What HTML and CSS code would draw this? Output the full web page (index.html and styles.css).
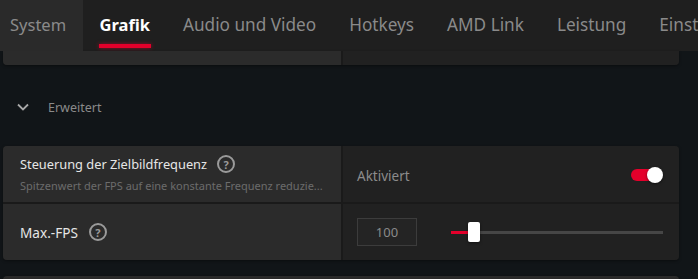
FILE: index.html
```html
<!DOCTYPE html>
<html lang="de">
<head>
    <meta charset="UTF-8">
    <title>Grafik</title>
    <link rel="stylesheet" href="styles.css">
</head>
<body>

<nav class="tabs">
    <div class="tab first">System</div>
    <div class="tab active">Grafik</div>
    <div class="tab">Audio und Video</div>
    <div class="tab">Hotkeys</div>
    <div class="tab">AMD Link</div>
    <div class="tab">Leistung</div>
    <div class="tab">Einste</div>
</nav>

<div class="content">
    <div class="card card-top">
        <div class="cell left"></div>
        <div class="cell right"></div>
    </div>

    <div class="section">
        <svg class="chevron" width="12" height="8" viewBox="0 0 12 8">
            <path d="M1 1.5 L6 6.5 L11 1.5" fill="none" stroke="#a8a8a8" stroke-width="1.8"/>
        </svg>
        <span>Erweitert</span>
    </div>

    <div class="card">
        <div class="cell left">
            <div class="title">Steuerung der Zielbildfrequenz <span class="help">?</span></div>
            <div class="sub">Spitzenwert der FPS auf eine konstante Frequenz reduzie...</div>
        </div>
        <div class="cell right">
            <span class="value">Aktiviert</span>
            <div class="toggle"><div class="knob"></div></div>
        </div>
        <div class="cell left">
            <div class="title short">Max.-FPS <span class="help">?</span></div>
        </div>
        <div class="cell right">
            <div class="num">100</div>
            <div class="slider">
                <div class="fill" style="width: 9%"></div>
                <div class="thumb" style="left: 9%"></div>
            </div>
        </div>
    </div>

    <div class="card card-next"></div>
</div>

</body>
</html>
```

FILE: styles.css
```css
body {
    margin: 0;
    background-color: #111518;
    font-family: "Noto Sans", "Open Sans", sans-serif;
    overflow: hidden;
}
.tabs {
    display: flex;
    height: 51px;
    background-color: #1f1f1f;
    white-space: nowrap;
    overflow: hidden;
}
.tab {
    display: flex;
    align-items: center;
    padding: 0 16.5px 3px 16.5px;
    font-size: 17.2px;
    color: #8a8a8a;
    position: relative;
}
.tab.first {
    padding-left: 10px;
    padding-right: 17px;
    font-size: 16.5px;
    background-color: #2a2a2a;
}
.tab.active {
    color: #ffffff;
    font-size: 16.5px;
    font-weight: bold;
}
.tab.active::after {
    content: "";
    position: absolute;
    left: 16px;
    right: 16px;
    bottom: 3px;
    height: 4px;
    background: #e4002b;
    box-shadow: 0 0 4px rgba(228, 0, 43, 0.6);
}
.content {
    padding: 0 19px 0 3px;
}
.card {
    display: grid;
    grid-template-columns: 338px 1fr;
    gap: 2px;
    background-color: #1a1a1a;
    border-radius: 4px;
    overflow: hidden;
    box-shadow: 0 1px 3px rgba(0, 0, 0, 0.4);
}
.card-top {
    height: 14px;
    border-radius: 0 0 4px 4px;
}
.card-next {
    margin-top: 16px;
    height: 20px;
    background-color: #2a2a2a;
}
.cell {
    height: 56px;
    box-sizing: border-box;
}
.card-top .cell {
    height: 14px;
}
.cell.left {
    background-color: #2b2b2b;
    padding-left: 17px;
    display: flex;
    flex-direction: column;
    justify-content: center;
}
.cell.right {
    background-color: #212121;
    display: flex;
    align-items: center;
    padding: 0 16px 0 14px;
}
.section {
    height: 81px;
    box-sizing: border-box;
    padding-top: 3px;
    display: flex;
    align-items: center;
    padding-left: 14px;
    gap: 19px;
    font-size: 12.5px;
    color: #8a8a8a;
}
.title {
    display: flex;
    align-items: center;
    gap: 10px;
    font-size: 12.8px;
    color: #e6e6e6;
}
.title.short {
    font-size: 13.6px;
    gap: 11px;
}
.sub {
    margin-top: 5px;
    font-size: 11px;
    color: #6c6c6c;
    white-space: nowrap;
}
.help {
    width: 14px;
    height: 14px;
    border: 2px solid #9a9a9a;
    border-radius: 50%;
    display: inline-flex;
    align-items: center;
    justify-content: center;
    font-size: 11px;
    font-weight: bold;
    color: #9a9a9a;
}
.value {
    font-size: 13.5px;
    color: #8c8c8c;
    flex: 1;
    margin-top: 3px;
}
.toggle {
    width: 28px;
    height: 12px;
    background: #e4002b;
    border-radius: 6px;
    position: relative;
    margin-right: 4px;
    margin-top: 1px;
}
.knob {
    position: absolute;
    right: -4px;
    top: -2px;
    width: 16px;
    height: 16px;
    border-radius: 50%;
    background: #ffffff;
    box-shadow: 0 1px 3px rgba(0, 0, 0, 0.5);
}
.num {
    width: 58px;
    height: 26px;
    border: 1px solid #3c3c3c;
    background: #242424;
    display: flex;
    align-items: center;
    justify-content: center;
    font-size: 13px;
    color: #8a8a8a;
}
.slider {
    flex: 1;
    height: 3px;
    background: #464646;
    margin-left: 34px;
    position: relative;
}
.fill {
    height: 100%;
    background: #e4002b;
}
.thumb {
    position: absolute;
    top: -9px;
    width: 12px;
    height: 20px;
    margin-left: -2px;
    background: #ffffff;
    border-radius: 2px;
    box-shadow: 0 1px 3px rgba(0, 0, 0, 0.5);
}
```
